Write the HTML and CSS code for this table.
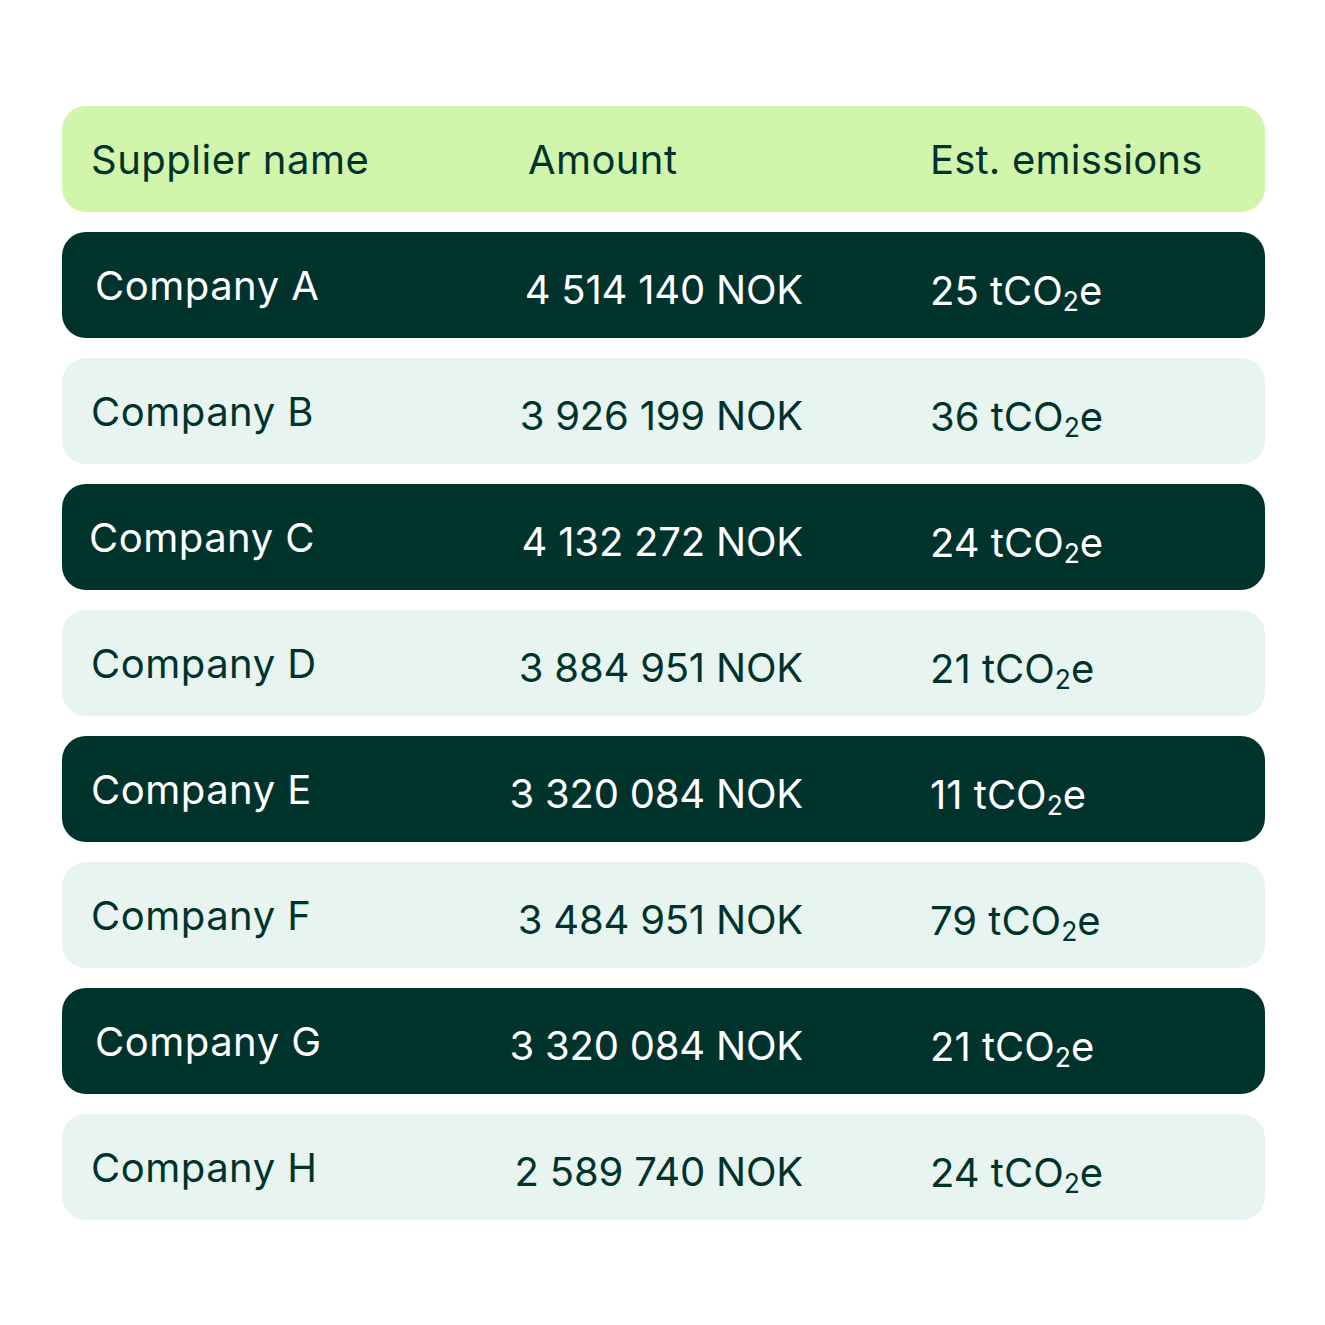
FILE: index.html
```html
<!DOCTYPE html>
<html>
<head>
<meta charset="utf-8">
<link rel="stylesheet" href="styles.css">
</head>
<body>
<div class="table">
  <div class="row head">
    <div class="cell name">Supplier name</div>
    <div class="cell amount-h">Amount</div>
    <div class="cell em">Est. emissions</div>
  </div>
  <div class="row dark">
    <div class="cell name shift-r">Company A</div>
    <div class="cell amount">4 514 140 NOK</div>
    <div class="cell em">25 tCO<sub>2</sub>e</div>
  </div>
  <div class="row light">
    <div class="cell name">Company B</div>
    <div class="cell amount">3 926 199 NOK</div>
    <div class="cell em">36 tCO<sub>2</sub>e</div>
  </div>
  <div class="row dark">
    <div class="cell name shift-l">Company C</div>
    <div class="cell amount">4 132 272 NOK</div>
    <div class="cell em">24 tCO<sub>2</sub>e</div>
  </div>
  <div class="row light">
    <div class="cell name">Company D</div>
    <div class="cell amount">3 884 951 NOK</div>
    <div class="cell em">21 tCO<sub>2</sub>e</div>
  </div>
  <div class="row dark">
    <div class="cell name">Company E</div>
    <div class="cell amount">3 320 084 NOK</div>
    <div class="cell em">11 tCO<sub>2</sub>e</div>
  </div>
  <div class="row light">
    <div class="cell name">Company F</div>
    <div class="cell amount">3 484 951 NOK</div>
    <div class="cell em">79 tCO<sub>2</sub>e</div>
  </div>
  <div class="row dark">
    <div class="cell name shift-r">Company G</div>
    <div class="cell amount">3 320 084 NOK</div>
    <div class="cell em">21 tCO<sub>2</sub>e</div>
  </div>
  <div class="row light">
    <div class="cell name">Company H</div>
    <div class="cell amount">2 589 740 NOK</div>
    <div class="cell em">24 tCO<sub>2</sub>e</div>
  </div>
</div>
</body>
</html>
```
FILE: styles.css
```css
html, body {
  margin: 0;
  padding: 0;
  background: #ffffff;
}
body {
  font-family: Inter, "Liberation Sans", sans-serif;
  font-size: 40px;
  color: #01332d;
}
.table {
  width: 1203px;
  margin: 106px 0 0 62px;
  display: flex;
  flex-direction: column;
  gap: 20px;
}
.row {
  height: 106px;
  border-radius: 24px;
  display: flex;
  align-items: center;
}
.head { background: #d1f5ab; }
.dark { background: #01332d; color: #ffffff; }
.light { background: #e7f4f0; color: #01332d; }
.cell { white-space: nowrap; }
.name {
  width: 329px;
  padding-left: 29px;
  box-sizing: border-box;
  letter-spacing: 0.5px;
}
.name.shift-r { padding-left: 33px; }
.name.shift-l { padding-left: 27px; }
.head .name { padding-left: 29px; }
.amount-h {
  width: 539px;
  padding-left: 137px;
  box-sizing: border-box;
  letter-spacing: 0.4px;
}
.amount {
  width: 412px;
  text-align: right;
  padding-top: 8px;
  margin-right: 127px;
  letter-spacing: -0.2px;
}
.em {
  padding-top: 10px;
}
.head .em {
  padding-top: 0;
  letter-spacing: 0.2px;
}
sub {
  font-size: 0.66em;
  vertical-align: -0.24em;
  line-height: 0;
}
```
